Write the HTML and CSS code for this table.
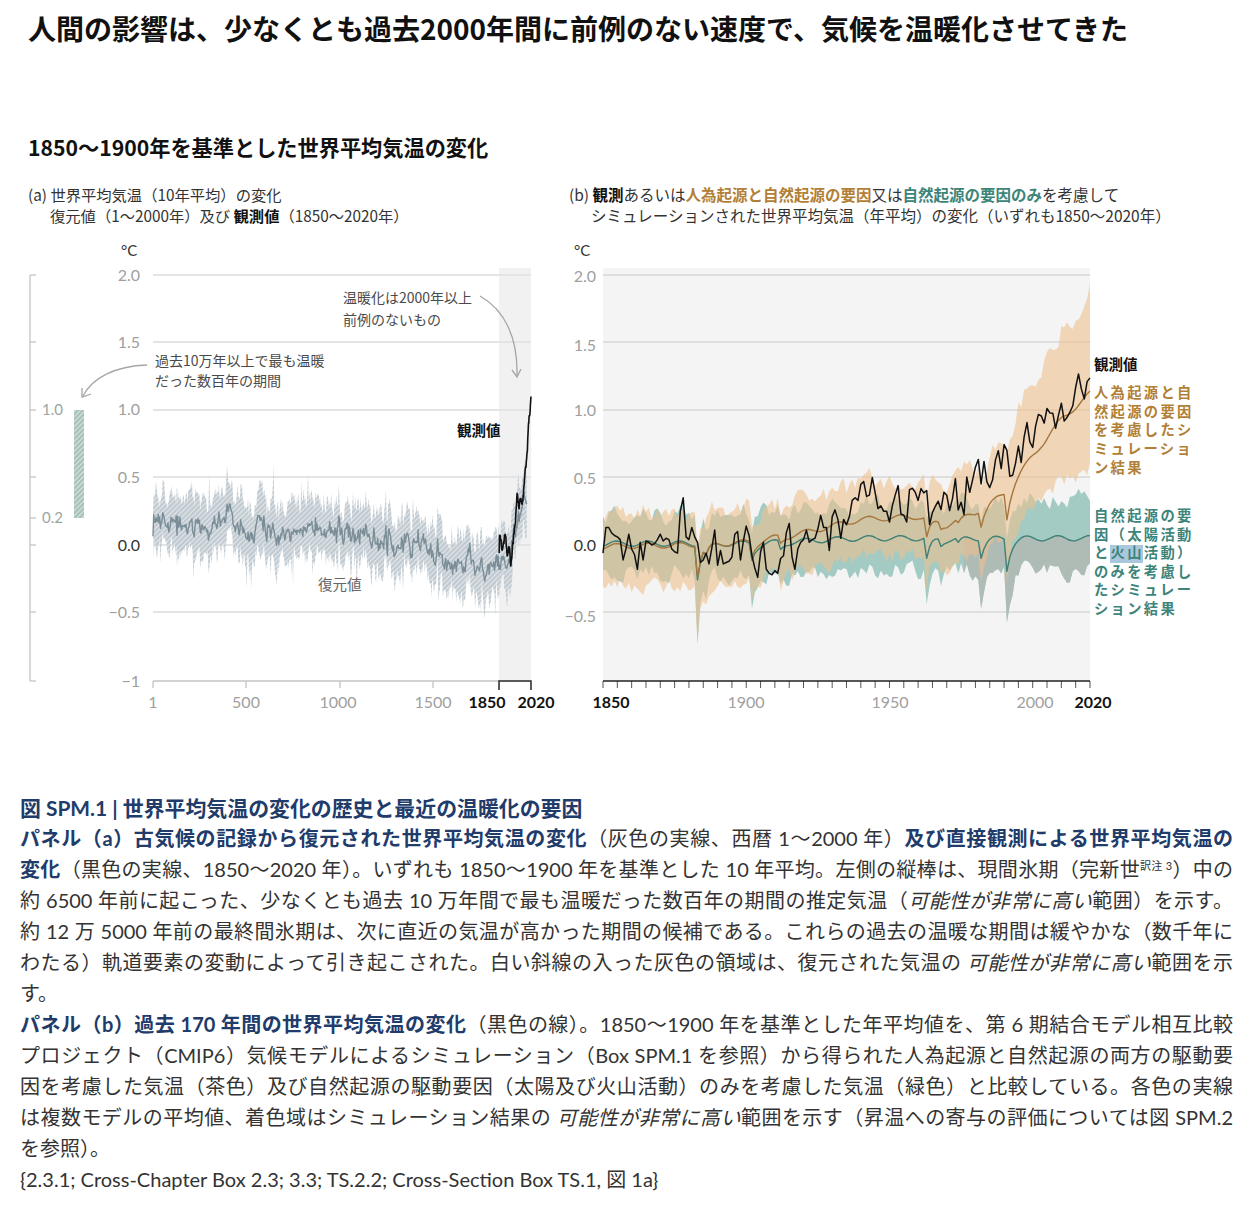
FILE: index.html
```html
<!DOCTYPE html>
<html lang="ja">
<head>
<meta charset="utf-8">
<title>SPM.1</title>
<link rel="stylesheet" href="styles.css">
</head>
<body>
<h1 class="title">人間の影響は、少なくとも過去2000年間に前例のない速度で、気候を温暖化させてきた</h1>

<section class="figure">
  <h2 class="fig-title">1850〜1900年を基準とした世界平均気温の変化</h2>
  <div class="panels">
    <div class="panel panel-a">
      <p class="panel-head">(a) 世界平均気温（10年平均）の変化<span class="sub">復元値（1〜2000年）及び <b>観測値</b>（1850〜2020年）</span></p>
      <svg class="chart" width="560" height="510" viewBox="0 226 560 510">
        <defs>
          <pattern id="hatchA" width="3.5" height="3.5" patternUnits="userSpaceOnUse" patternTransform="rotate(45)">
            <rect width="3.5" height="3.5" fill="#c0cad0"/>
            <rect width="1.1" height="3.5" fill="#e3e8eb"/>
          </pattern>
          <pattern id="hatchG" width="3.5" height="3.5" patternUnits="userSpaceOnUse" patternTransform="rotate(45)">
            <rect width="3.5" height="3.5" fill="#a8c1b9"/>
            <rect width="1.1" height="3.5" fill="#d9e5e1"/>
          </pattern>
        </defs>
        <!-- left scale -->
        <g class="ax-light">
          <line x1="30" y1="275" x2="30" y2="681"/>
          <line x1="30" y1="275" x2="36" y2="275"/>
          <line x1="30" y1="342" x2="36" y2="342"/>
          <line x1="30" y1="410" x2="36" y2="410"/>
          <line x1="30" y1="477" x2="36" y2="477"/>
          <line x1="30" y1="518" x2="36" y2="518"/>
          <line x1="30" y1="545" x2="36" y2="545"/>
          <line x1="30" y1="612" x2="36" y2="612"/>
          <line x1="30" y1="681" x2="36" y2="681"/>
        </g>
        <text class="tick side" x="42" y="415">1.0</text>
        <text class="tick side" x="42" y="523">0.2</text>
        <rect x="74" y="410" width="10" height="108" fill="url(#hatchG)"/>

        <text class="unit" x="121" y="256">°C</text>
        <rect x="499" y="268" width="32" height="413" fill="#f1f1f1"/>
        <g class="grid">
          <line x1="153" y1="275" x2="531" y2="275"/>
          <line x1="153" y1="342" x2="531" y2="342"/>
          <line x1="153" y1="410" x2="531" y2="410"/>
          <line x1="153" y1="477" x2="531" y2="477"/>
          <line x1="153" y1="545" x2="531" y2="545"/>
          <line x1="153" y1="612" x2="531" y2="612"/>
        </g>
        <g class="yt">
          <text class="tick" x="140" y="281">2.0</text>
          <text class="tick" x="140" y="348">1.5</text>
          <text class="tick" x="140" y="415">1.0</text>
          <text class="tick" x="140" y="483">0.5</text>
          <text class="tick zero" x="140" y="551">0.0</text>
          <text class="tick" x="140" y="618">−0.5</text>
          <text class="tick" x="140" y="687">−1</text>
        </g>

        <g id="a-recon"></g>
        <g id="a-obs"></g>

        <g class="ax-light">
          <line x1="153" y1="681" x2="531" y2="681"/>
          <line x1="153" y1="681" x2="153" y2="688"/>
          <line x1="246" y1="681" x2="246" y2="688"/>
          <line x1="340" y1="681" x2="340" y2="688"/>
          <line x1="433" y1="681" x2="433" y2="688"/>
        </g>
        <path class="bracket" d="M499,690 V681 H531 V690"/>
        <g class="xt-g">
          <text class="xt" x="153" y="708">1</text>
          <text class="xt" x="246" y="708">500</text>
          <text class="xt" x="338" y="708">1000</text>
          <text class="xt" x="433" y="708">1500</text>
          <text class="xt b" x="487" y="708">1850</text>
          <text class="xt b" x="536" y="708">2020</text>
        </g>

        <text class="note" x="343" y="303">温暖化は2000年以上</text>
        <text class="note" x="343" y="325">前例のないもの</text>
        <path class="arrow" d="M480,296 C505,310 518,338 517,376"/>
        <path class="arrow" d="M512,370 L517,377 L521,369"/>

        <text class="note" x="155" y="366">過去10万年以上で最も温暖</text>
        <text class="note" x="155" y="386">だった数百年の期間</text>
        <path class="arrow" d="M147,365 C115,366 92,378 83,396"/>
        <path class="arrow" d="M82,388 L82,397 L91,394"/>

        <text class="lbl-obs" x="457" y="436">観測値</text>
        <text class="lbl-rec" x="318" y="590">復元値</text>
      </svg>
    </div>

    <div class="panel panel-b">
      <p class="panel-head">(b) <b>観測</b>あるいは<b class="c-brown">人為起源と自然起源の要因</b>又は<b class="c-teal">自然起源の要因のみ</b>を考慮して<span class="sub">シミュレーションされた世界平均気温（年平均）の変化（いずれも1850〜2020年）</span></p>
      <svg class="chart" width="691" height="510" viewBox="560 226 691 510">
        <text class="unit" x="574" y="256">°C</text>
        <rect x="603" y="268" width="487" height="413" fill="#f4f4f4"/>
        <g class="grid grid-b">
          <line x1="603" y1="275" x2="1090" y2="275"/>
          <line x1="603" y1="342" x2="1090" y2="342"/>
          <line x1="603" y1="410" x2="1090" y2="410"/>
          <line x1="603" y1="477" x2="1090" y2="477"/>
          <line x1="603" y1="545" x2="1090" y2="545"/>
          <line x1="603" y1="612" x2="1090" y2="612"/>
        </g>
        <g class="yt">
          <text class="tick" x="596" y="282">2.0</text>
          <text class="tick" x="596" y="351">1.5</text>
          <text class="tick" x="596" y="416">1.0</text>
          <text class="tick" x="596" y="484">0.5</text>
          <text class="tick zero" x="596" y="551">0.0</text>
          <text class="tick" x="596" y="622">−0.5</text>
        </g>

        <g id="b-series"></g>

        <g id="b-ticks" class="ax-dark"></g>
        <line class="axis-b" x1="603" y1="681" x2="1090" y2="681"/>
        <g class="xt-g">
          <text class="xt b" x="611" y="708">1850</text>
          <text class="xt" x="746" y="708">1900</text>
          <text class="xt" x="890" y="708">1950</text>
          <text class="xt" x="1035" y="708">2000</text>
          <text class="xt b" x="1093" y="708">2020</text>
        </g>

        <text class="lbl-obs" x="1094" y="370">観測値</text>
        <g class="side-lbl brown">
          <text x="1094" y="398">人為起源と自</text>
          <text x="1094" y="416.7">然起源の要因</text>
          <text x="1094" y="435.4">を考慮したシ</text>
          <text x="1094" y="454.1">ミュレーショ</text>
          <text x="1094" y="472.8">ン結果</text>
        </g>
        <rect class="hl" x="1110" y="545" width="33" height="18"/>
        <g class="side-lbl teal">
          <text x="1094" y="521">自然起源の要</text>
          <text x="1094" y="539.6">因（太陽活動</text>
          <text x="1094" y="558.2">と火山活動）</text>
          <text x="1094" y="576.8">のみを考慮し</text>
          <text x="1094" y="595.4">たシミュレー</text>
          <text x="1094" y="614">ション結果</text>
        </g>
      </svg>
    </div>
  </div>
</section>

<section class="caption">
  <p class="cap-head">図 SPM.1 | 世界平均気温の変化の歴史と最近の温暖化の要因</p>
  <p class="cap-para">
    <span class="ln"><b>パネル（a）古気候の記録から復元された世界平均気温の変化</b>（灰色の実線、西暦 1〜2000 年）<b>及び直接観測による世界平均気温の</b></span>
    <span class="ln"><b>変化</b>（黒色の実線、1850〜2020 年）。いずれも 1850〜1900 年を基準とした 10 年平均。左側の縦棒は、現間氷期（完新世<sup class="fn">訳注 3</sup>）中の</span>
    <span class="ln">約 6500 年前に起こった、少なくとも過去 10 万年間で最も温暖だった数百年の期間の推定気温（<i>可能性が非常に高い</i>範囲）を示す。</span>
    <span class="ln">約 12 万 5000 年前の最終間氷期は、次に直近の気温が高かった期間の候補である。これらの過去の温暖な期間は緩やかな（数千年に</span>
    <span class="ln">わたる）軌道要素の変動によって引き起こされた。白い斜線の入った灰色の領域は、復元された気温の <i>可能性が非常に高い</i>範囲を示</span>
    <span class="end">す。</span>
  </p>
  <p class="cap-para">
    <span class="ln"><b>パネル（b）過去 170 年間の世界平均気温の変化</b>（黒色の線）。1850〜1900 年を基準とした年平均値を、第 6 期結合モデル相互比較</span>
    <span class="ln">プロジェクト（CMIP6）気候モデルによるシミュレーション（Box SPM.1 を参照）から得られた人為起源と自然起源の両方の駆動要</span>
    <span class="ln">因を考慮した気温（茶色）及び自然起源の駆動要因（太陽及び火山活動）のみを考慮した気温（緑色）と比較している。各色の実線</span>
    <span class="ln">は複数モデルの平均値、着色域はシミュレーション結果の <i>可能性が非常に高い</i>範囲を示す（昇温への寄与の評価については図 SPM.2</span>
    <span class="end">を参照）。</span>
  </p>
  <p class="cap-ref">{2.3.1; Cross-Chapter Box 2.3; 3.3; TS.2.2; Cross-Section Box TS.1, 図 1a}</p>
</section>

<script src="script.js"></script>
</body>
</html>
```

FILE: styles.css
```css
* { box-sizing: border-box; }

body {
  margin: 0;
  width: 1251px;
  background: #ffffff;
  color: #1a1a1a;
  font-family: "Noto Sans CJK JP", "Noto Sans", sans-serif;
}

.title {
  margin: 0;
  height: 56px;
  line-height: 56px;
  padding-left: 28px;
  font-size: 28px;
  font-weight: 700;
  color: #111;
  white-space: nowrap;
}

.fig-title {
  margin: 76px 0 0;
  padding-left: 28px;
  height: 30px;
  line-height: 30px;
  font-size: 21.2px;
  font-weight: 700;
  color: #111;
  white-space: nowrap;
}

.panels {
  display: flex;
  margin-top: 22px;
}

.panel-a { width: 560px; flex: none; }
.panel-b { flex: 1; }

.panel-head {
  margin: 0;
  height: 42px;
  font-size: 15.3px;
  line-height: 21px;
  color: #333;
  white-space: nowrap;
}
.panel-b .panel-head { font-size: 15.5px; }
.panel-a .panel-head { padding-left: 28px; }
.panel-b .panel-head { padding-left: 9px; }
.panel-head .sub { display: block; padding-left: 22px; }
.panel-head b { color: #111; }
.panel-head b.c-brown { color: #b27f36; }
.panel-head b.c-teal { color: #3d8479; }

.chart { display: block; overflow: visible; }

.chart text { font-family: "Noto Sans CJK JP", "Noto Sans", sans-serif; }

.ax-light line { stroke: #c4c4c4; stroke-width: 1.3; }
.ax-dark line { stroke: #555; stroke-width: 1; }
.axis-b { stroke: #222; stroke-width: 1.6; }
.bracket { fill: none; stroke: #333; stroke-width: 1.6; }

.grid line { stroke: #e4e4e4; stroke-width: 2; }
.grid-b line { stroke: #dedede; }

.chart text.tick {
  font-family: Lato, "Liberation Sans", sans-serif;
  font-size: 16px;
  fill: #a0a0a0;
  text-anchor: end;
}
.chart text.tick.zero { fill: #333; }
.chart text.tick.side { text-anchor: start; fill: #98a6a2; font-size: 15px; }

.chart text.unit {
  font-family: Lato, "Liberation Sans", sans-serif;
  font-size: 15px;
  fill: #333;
}

.chart text.xt {
  font-family: Lato, "Liberation Sans", sans-serif;
  font-size: 16px;
  fill: #a0a0a0;
  text-anchor: middle;
}
.chart text.xt.b { fill: #111; font-weight: 700; }

.chart text.note { font-size: 14px; fill: #4a4a4a; }
.arrow { fill: none; stroke: #a5a5a5; stroke-width: 1.3; }

.chart text.lbl-obs { font-size: 14.5px; font-weight: 700; fill: #111; }
.chart text.lbl-rec { font-size: 14.5px; fill: #666; }

.side-lbl text { font-size: 14.3px; font-weight: 700; letter-spacing: 2.3px; }
.side-lbl.brown text { fill: #b27f36; }
.side-lbl.teal text { fill: #3d8479; }
.hl { fill: #a9c8dd; }

.caption {
  margin-top: 56px;
  padding: 0 18px 0 20px;
  font-family: Lato, "Noto Sans CJK JP", sans-serif;
  font-size: 20px;
  line-height: 31px;
  color: #333;
}
.caption p { margin: 0; }
.caption b { color: #213b6a; font-weight: 700; }
.cap-head { color: #213b6a; font-weight: 700; font-size: 20.9px; }
.cap-para .ln {
  display: block;
  white-space: nowrap;
  text-align: justify;
  text-align-last: justify;
}
.cap-para .end { display: block; }
.caption i { font-style: italic; }
.fn { font-size: 11px; line-height: 0; vertical-align: 7px; }
```

FILE: script.js
```js
(function () {
  var NS = 'http://www.w3.org/2000/svg';

  function rng(seed) {
    return function () {
      seed = (seed + 0x6D2B79F5) | 0;
      var t = Math.imul(seed ^ (seed >>> 15), 1 | seed);
      t = (t + Math.imul(t ^ (t >>> 7), 61 | t)) ^ t;
      return ((t ^ (t >>> 14)) >>> 0) / 4294967296;
    };
  }
  function add(id, tag, attrs) {
    var g = document.getElementById(id);
    var e = document.createElementNS(NS, tag);
    for (var k in attrs) e.setAttribute(k, attrs[k]);
    g.appendChild(e);
    return e;
  }
  function pathOf(pts) {
    var s = '';
    for (var i = 0; i < pts.length; i++) {
      s += (i ? 'L' : 'M') + pts[i][0].toFixed(1) + ',' + pts[i][1].toFixed(1);
    }
    return s;
  }
  function bandOf(up, lo) {
    return pathOf(up) + 'L' + pathOf(lo.slice().reverse()).slice(1) + 'Z';
  }
  function interp(knots, x) {
    if (x <= knots[0][0]) return knots[0][1];
    for (var i = 1; i < knots.length; i++) {
      if (x <= knots[i][0]) {
        var a = knots[i - 1], b = knots[i];
        return a[1] + (b[1] - a[1]) * (x - a[0]) / (b[0] - a[0]);
      }
    }
    return knots[knots.length - 1][1];
  }

  /* observed annual global temperature (relative to 1961-1990), 1850-2020 */
  var obs = [
    -0.42,-0.23,-0.23,-0.27,-0.29,-0.30,-0.32,-0.47,-0.39,-0.28,
    -0.39,-0.43,-0.54,-0.34,-0.47,-0.33,-0.34,-0.36,-0.35,-0.32,
    -0.28,-0.33,-0.31,-0.32,-0.39,-0.41,-0.42,-0.11,-0.01,-0.30,
    -0.32,-0.23,-0.30,-0.34,-0.49,-0.47,-0.42,-0.50,-0.38,-0.25,
    -0.51,-0.40,-0.50,-0.49,-0.48,-0.45,-0.28,-0.26,-0.47,-0.33,
    -0.22,-0.29,-0.44,-0.53,-0.60,-0.41,-0.34,-0.54,-0.57,-0.58,
    -0.55,-0.57,-0.46,-0.44,-0.27,-0.20,-0.45,-0.54,-0.39,-0.34,
    -0.32,-0.25,-0.34,-0.32,-0.31,-0.24,-0.14,-0.23,-0.23,-0.40,
    -0.15,-0.10,-0.17,-0.31,-0.17,-0.21,-0.15,-0.03,-0.01,-0.03,
    0.09,0.11,0.00,0.01,0.14,0.03,-0.09,-0.07,-0.11,-0.11,
    -0.19,-0.07,0.01,0.08,-0.13,-0.14,-0.19,0.05,0.06,0.03,
    -0.03,0.06,0.03,0.05,-0.20,-0.11,-0.06,-0.02,-0.08,0.05,
    0.03,-0.08,0.01,0.16,-0.07,-0.01,-0.10,0.18,0.07,0.16,
    0.26,0.32,0.14,0.31,0.16,0.12,0.18,0.33,0.40,0.27,
    0.45,0.41,0.22,0.23,0.32,0.45,0.33,0.52,0.63,0.49,
    0.45,0.61,0.70,0.69,0.64,0.75,0.72,0.72,0.61,0.71,
    0.80,0.67,0.70,0.74,0.79,0.93,1.03,0.92,0.85,0.98,
    1.01
  ];
  var anom = obs.map(function (v, i) {
    var yr = 1850 + i;
    return v + 0.36 - Math.max(0, yr - 1960) * 0.0022;
  });

  /* ---------- panel (a) ---------- */
  var xa = function (yr) { return 153 + (yr - 1) * 378 / 2019; };
  var ya = function (v) { return 545 - 135 * v; };
  var r = rng(23);
  var baseA = [[1, 0.14], [900, 0.14], [1100, 0.07], [1450, 0.02], [1470, -0.1],
               [1550, -0.13], [1700, -0.14], [1850, -0.13], [1900, -0.05], [2000, 0.33]];
  var slow = 0, fast = 0, eu = 0, el = 0, mid = [], up = [], lo = [];
  for (var yr = 1; yr <= 2000; yr += 4) {
    slow = 0.8 * slow + (r() - 0.5) * 0.1;
    fast = 0.3 * fast + (r() - 0.5) * 0.08;
    var v = interp(baseA, yr) + slow + fast;
    if (r() < 0.03) v += (r() - 0.45) * 0.22;
    eu = 0.5 * eu + (r() - 0.5) * 0.13;
    el = 0.5 * el + (r() - 0.5) * 0.13;
    var w1 = 0.21 + eu + (r() < 0.035 ? r() * 0.22 : 0);
    var w2 = 0.21 + el + (r() < 0.035 ? r() * 0.22 : 0);
    mid.push([xa(yr), ya(v)]);
    up.push([xa(yr), ya(v + Math.max(0.07, w1))]);
    lo.push([xa(yr), ya(v - Math.max(0.07, w2))]);
  }
  add('a-recon', 'path', { d: bandOf(up, lo), fill: 'url(#hatchA)' });
  add('a-recon', 'path', { d: pathOf(mid), fill: 'none', stroke: '#7b8e98', 'stroke-width': 1.4, 'stroke-linejoin': 'round' });

  var pa = [];
  for (var i = 0; i < anom.length; i++) {
    var s = 0, n = 0;
    for (var j = Math.max(0, i - 9); j <= i; j++) { s += anom[j]; n++; }
    pa.push([xa(1850 + i), ya(s / n)]);
  }
  add('a-obs', 'path', { d: pathOf(pa), fill: 'none', stroke: '#111', 'stroke-width': 1.6, 'stroke-linejoin': 'round' });

  /* ---------- panel (b) ---------- */
  var xb = function (yr) { return 603 + (yr - 1850) * 487 / 170; };
  var yb = function (v) { return 545 - 135 * v; };

  for (var t = 1850; t <= 2020; t += 5) {
    add('b-ticks', 'line', { x1: xb(t), y1: 681, x2: xb(t), y2: 688 });
  }

  var erupt = [[1883, -0.25], [1886, -0.06], [1902, -0.12], [1912, -0.06],
               [1963, -0.16], [1968, -0.05], [1974, -0.04], [1982, -0.13], [1991, -0.23]];
  function volc(y) {
    var s = 0;
    for (var k = 0; k < erupt.length; k++) {
      var d = y - erupt[k][0];
      if (d >= 0) s += erupt[k][1] * Math.exp(-d / 1.5);
    }
    return s;
  }
  var antK = [[1850, -0.01], [1880, 0.0], [1900, 0.02], [1920, 0.09], [1940, 0.19],
              [1960, 0.21], [1970, 0.16], [1980, 0.24], [1990, 0.38], [2000, 0.66],
              [2010, 0.93], [2020, 1.12]];
  var uK = [[1850, 0.22], [1950, 0.27], [1980, 0.33], [2000, 0.56], [2020, 0.76]];
  var lK = [[1850, 0.3], [1950, 0.28], [1980, 0.3], [2000, 0.36], [2020, 0.55]];

  var r2 = rng(5);
  var n1 = 0, n2 = 0, n3 = 0, n4 = 0;
  var gU = [], gL = [], gM = [], oU = [], oL = [], oM = [], ob = [], grU = [], grL = [];
  for (var y = 1850; y <= 2020; y++) {
    var vo = volc(y);
    var sol = 0.02 * Math.sin(2 * Math.PI * (y - 1852) / 11);
    var nat = 0.01 + 0.04 * Math.min(1, Math.max(0, (y - 1900) / 40)) + sol + vo;
    var ant = interp(antK, y) + vo * 0.9 + sol;
    n1 = 0.45 * n1 + (r2() - 0.5) * 0.12;
    n2 = 0.45 * n2 + (r2() - 0.5) * 0.12;
    n3 = 0.45 * n3 + (r2() - 0.5) * 0.14;
    n4 = 0.45 * n4 + (r2() - 0.5) * 0.12;
    var x = xb(y);
    gU.push([x, yb(nat + 0.2 + 0.1 * (y - 1850) / 170 + n1)]);
    gL.push([x, yb(nat - 0.21 - 0.04 * (y - 1850) / 170 + vo * 0.8 + n2)]);
    oU.push([x, yb(ant + interp(uK, y) + n3)]);
    oL.push([x, yb(ant - interp(lK, y) + vo * 0.7 + n4)]);
    gM.push([x, yb(nat)]);
    oM.push([x, yb(ant)]);
    ob.push([x, yb(anom[y - 1850])]);
    if (y >= 1976) { grU.push([x, yb(nat)]); grL.push(gL[gL.length - 1]); }
  }
  add('b-series', 'path', { d: bandOf(gU, gL), fill: '#a3cbc4' });
  add('b-series', 'path', { d: bandOf(grU, grL), fill: '#b3b5b1', 'fill-opacity': 0.7 });
  add('b-series', 'path', { d: bandOf(oU, oL), fill: '#efbf8c', 'fill-opacity': 0.58 });
  add('b-series', 'path', { d: pathOf(gM), fill: 'none', stroke: '#3f8077', 'stroke-width': 1.4, 'stroke-linejoin': 'round' });
  add('b-series', 'path', { d: pathOf(oM), fill: 'none', stroke: '#a5763d', 'stroke-width': 1.4, 'stroke-linejoin': 'round' });
  add('b-series', 'path', { d: pathOf(ob), fill: 'none', stroke: '#111', 'stroke-width': 1.5, 'stroke-linejoin': 'round' });
})();
```
